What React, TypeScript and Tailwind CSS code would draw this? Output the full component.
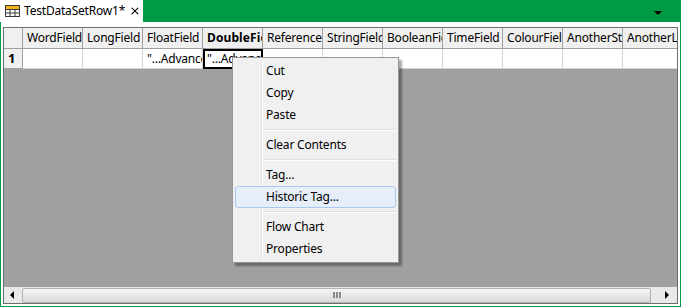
import { X } from "lucide-react";

const columns = [
  "WordField",
  "LongField",
  "FloatField",
  "DoubleField",
  "ReferenceField",
  "StringField",
  "BooleanField",
  "TimeField",
  "ColourField",
  "AnotherString",
  "AnotherLong",
];

const cells: Record<string, string> = {
  FloatField: "\"...Advanced",
  DoubleField: "\"...Advanced",
};

type MenuEntry = { label: string; hover?: boolean } | "sep";

const menu: MenuEntry[] = [
  { label: "Cut" },
  { label: "Copy" },
  { label: "Paste" },
  "sep",
  { label: "Clear Contents" },
  "sep",
  { label: "Tag..." },
  { label: "Historic Tag...", hover: true },
  "sep",
  { label: "Flow Chart" },
  { label: "Properties" },
];

function TableIcon() {
  return (
    <svg width="15" height="12" viewBox="0 0 15 12" className="shrink-0">
      <rect x="0.5" y="0.5" width="14" height="11" fill="#fff" stroke="#3a3a3a" />
      <rect x="1" y="1" width="13" height="3" fill="#f2b21c" />
      <line x1="0.5" y1="4.5" x2="14.5" y2="4.5" stroke="#3a3a3a" />
      <line x1="0.5" y1="8" x2="14.5" y2="8" stroke="#3a3a3a" />
      <line x1="5" y1="4.5" x2="5" y2="11.5" stroke="#3a3a3a" />
      <line x1="10" y1="4.5" x2="10" y2="11.5" stroke="#3a3a3a" />
    </svg>
  );
}

function ContextMenu() {
  return (
    <div className="absolute left-[232px] top-[57px] w-[167px] border border-[#979797] bg-[#f0f0f0] p-[2px] shadow-[3px_3px_2px_rgba(0,0,0,0.35)]">
      <div className="absolute left-[28px] top-[2px] bottom-[2px] w-[2px] border-l border-[#e2e3e3] bg-white" />
      {menu.map((m, i) =>
        m === "sep" ? (
          <div key={i} className="flex h-[8px] items-center pl-[29px]">
            <div className="h-[2px] w-full border-t border-[#e0e0e0] bg-white" />
          </div>
        ) : (
          <div
            key={i}
            className={
              m.hover
                ? "relative flex h-[22px] items-center rounded-[3px] border border-[#a8c8ee] bg-[#e6eef9] pl-[30px]"
                : "relative flex h-[22px] items-center pl-[31px]"
            }
          >
            {m.label}
          </div>
        )
      )}
    </div>
  );
}

export default function App() {
  return (
    <div
      className="relative h-[308px] w-[681px] overflow-hidden bg-white text-[12px] tracking-[-0.2px] text-black"
      style={{ fontFamily: '"Noto Sans", sans-serif' }}
    >
      <div className="flex h-[22px] bg-[#009a44]">
        <div className="flex w-[143px] items-center gap-[4px] bg-white pl-[5px]">
          <TableIcon />
          <span className="whitespace-nowrap">TestDataSetRow1*</span>
          <X size={14} strokeWidth={2.2} className="ml-auto mr-[2px]" />
        </div>
        <div className="ml-auto mr-[19px] mt-[11px] h-0 w-0 border-x-[4px] border-t-[4px] border-x-transparent border-t-black" />
      </div>

      <div className="border-x border-b border-[#009a44] px-[2px] pb-[2px] pt-[5px]">
        <div className="flex h-[277px] w-[675px] flex-col border border-[#6d6d6d] bg-[#a0a0a0]">
          <div className="flex h-[21px] shrink-0 overflow-hidden">
            <div className="w-[19px] shrink-0 border-b border-r border-[#a0a0a0] bg-[#f0f0f0]" />
            {columns.map((c) => (
              <div
                key={c}
                className={
                  "flex w-[60px] shrink-0 items-center overflow-hidden whitespace-nowrap border-b border-r border-[#a0a0a0] bg-[#f0f0f0] pl-[4px]" +
                  (c === "DoubleField" ? " font-bold tracking-[0.1px]" : "")
                }
              >
                {c}
              </div>
            ))}
          </div>
          <div className="flex h-[20px] shrink-0 overflow-hidden">
            <div className="flex w-[19px] shrink-0 items-center border-b border-r border-[#a0a0a0] bg-[#f0f0f0] pl-[4px] text-[13px] font-bold">
              1
            </div>
            {columns.map((c) => (
              <div
                key={c}
                className={
                  c === "DoubleField"
                    ? "flex w-[60px] shrink-0 items-center overflow-hidden whitespace-nowrap border-2 border-black bg-white pl-[2px]"
                    : "flex w-[60px] shrink-0 items-center overflow-hidden whitespace-nowrap border-b border-r border-[#d4d4d4] bg-white pl-[4px]"
                }
              >
                {cells[c] ?? ""}
              </div>
            ))}
          </div>
          <div className="flex-1" />
          <div className="flex h-[16px] shrink-0 items-center bg-[#e9e9e9]">
            <div className="ml-[6px] h-0 w-0 border-y-[4px] border-r-[4px] border-y-transparent border-r-black" />
            <div className="ml-[8px] flex h-[15px] w-[629px] items-center justify-center gap-[1px] rounded-[2px] border border-[#b2b2b2] bg-gradient-to-b from-[#f5f5f5] to-[#dadada]">
              <div className="h-[6px] w-[2px] border-x border-[#8a8a8a] bg-[#e8e8e8]" />
              <div className="h-[6px] w-[2px] border-x border-[#8a8a8a] bg-[#e8e8e8]" />
              <div className="h-[6px] w-[2px] border-x border-[#8a8a8a] bg-[#e8e8e8]" />
            </div>
            <div className="ml-[14px] h-0 w-0 border-y-[4px] border-l-[4px] border-y-transparent border-l-black" />
          </div>
        </div>
      </div>

      <ContextMenu />
    </div>
  );
}
